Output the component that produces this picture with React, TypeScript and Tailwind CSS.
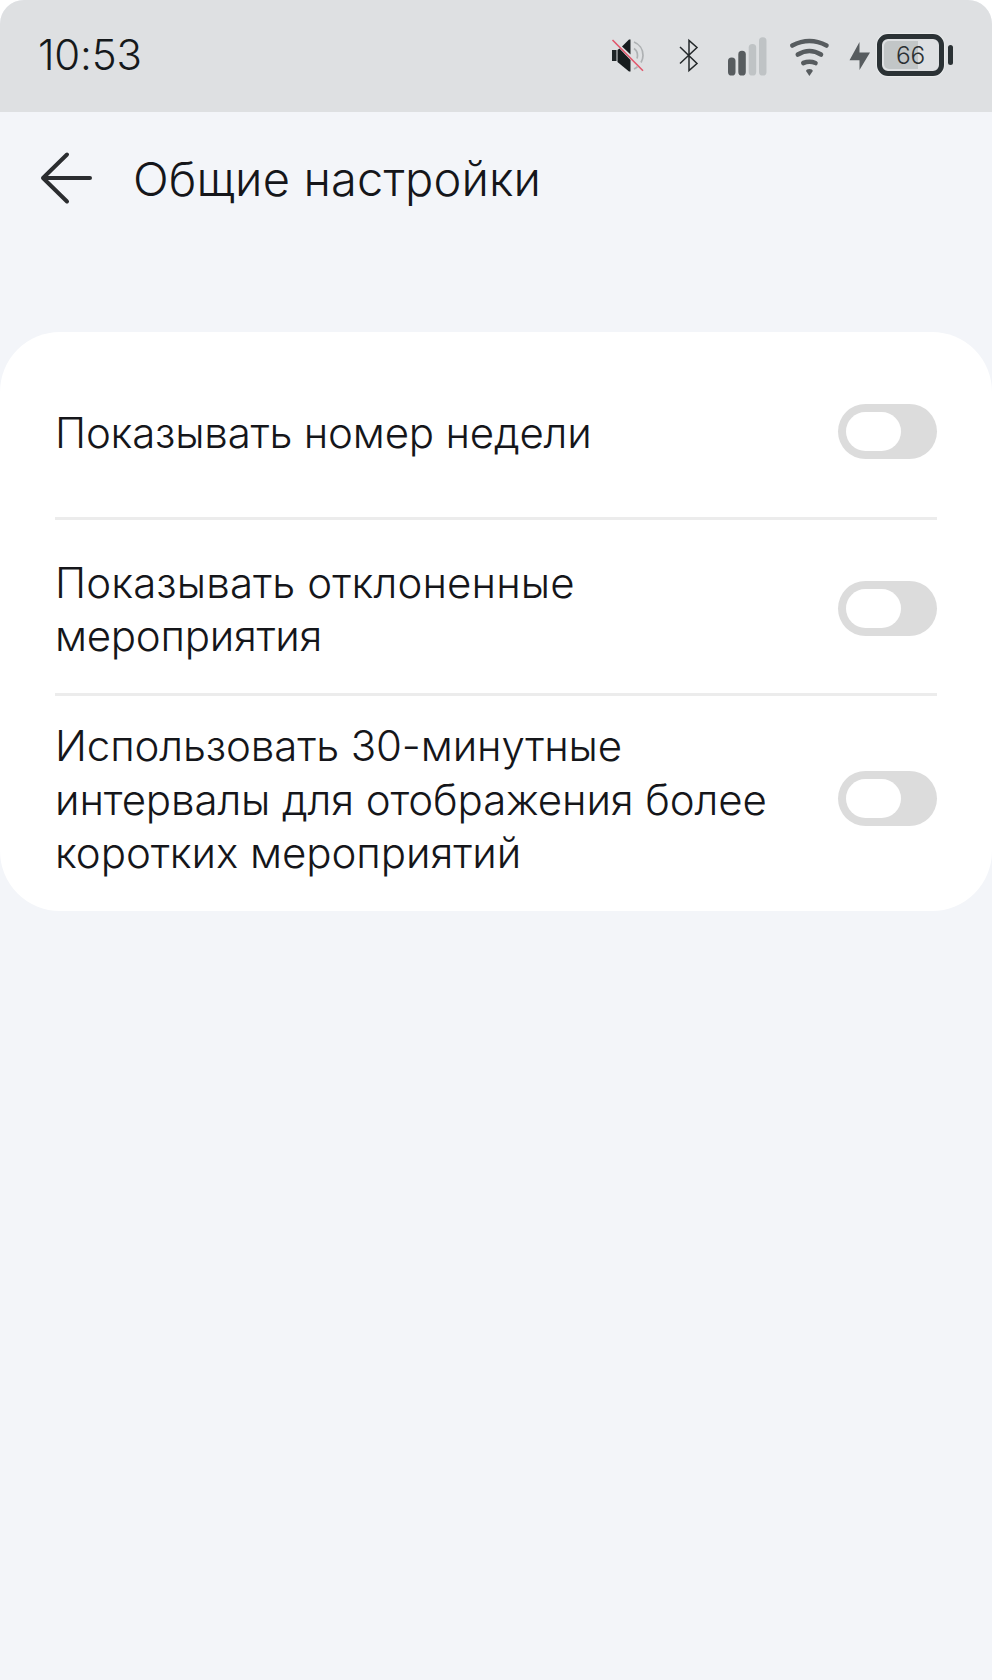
import { useState } from 'react';

interface Setting {
  id: string;
  lines: { text: string; tracking: string }[];
  rowClass: string;
  textClass: string;
}

const SETTINGS: Setting[] = [
  {
    id: 'week-number',
    lines: [{ text: 'Показывать номер недели', tracking: 'tracking-[-0.200px]' }],
    rowClass: 'h-[170px] pb-[2px]',
    textClass: 'pt-1',
  },
  {
    id: 'declined',
    lines: [
      { text: 'Показывать отклоненные', tracking: 'tracking-[0.120px]' },
      { text: 'мероприятия', tracking: 'tracking-[-0.280px]' },
    ],
    rowClass: 'h-[170px] pt-[3px]',
    textClass: 'pt-[2px]',
  },
  {
    id: 'half-hour',
    lines: [
      { text: 'Использовать 30-минутные', tracking: 'tracking-[-0.120px]' },
      { text: 'интервалы для отображения более', tracking: 'tracking-[-0.120px]' },
      { text: 'коротких мероприятий', tracking: 'tracking-[-0.060px]' },
    ],
    rowClass: 'h-[201px] pt-[2px]',
    textClass: 'pt-[2px]',
  },
];

function StatusIcons() {
  return (
    <div className="flex items-center">
      {/* Muted speaker */}
      <svg width="34" height="44" viewBox="611 32 34 44" fill="none">
        <path d="M612 49h4.500v11h-4.500z" fill="#1f2527" />
        <path d="M617.500 49l2-1.500L630.500 59v11.500h-1.500L617.500 61z" fill="#171c1e" />
        <path d="M622 45.500L629 38.500h1.500V53.500z" fill="#171c1e" />
        <path d="M634 41c5 2 9 7 9 13.500 0 3-.8 5-2 7M634 47.500c2.300 1.500 3.500 4 3.500 7 0 1-.2 2-.5 3M634 68c1.500-.6 2.700-1.500 3.500-2.300" stroke="#aeb1b3" strokeWidth="1.700" />
        <path d="M612.500 39L643 69.800" stroke="#e2566b" strokeWidth="1.600" />
      </svg>

      {/* Bluetooth */}
      <svg className="ml-[33px]" width="21" height="44" viewBox="678 32 21 44" fill="none" stroke="#24292b" strokeWidth="1.500">
        <path d="M680 46L697 62.500 689 69.500V39.500L697 46.500 680 62.500" />
      </svg>

      {/* Cell signal */}
      <svg className="ml-[29px]" width="39" height="44" viewBox="728 33 39 44">
        <rect x="728" y="57.500" width="7.500" height="18" rx="3.600" fill="#575c5f" />
        <rect x="738.300" y="50.800" width="7.500" height="24.700" rx="3.600" fill="#575c5f" />
        <rect x="748.700" y="44" width="7.500" height="31.500" rx="3.600" fill="#bfc3c5" />
        <rect x="759" y="37.300" width="7.500" height="38.200" rx="3.600" fill="#bfc3c5" />
      </svg>

      {/* Wi-Fi */}
      <svg className="ml-[22px]" width="41" height="44" viewBox="789 32 41 44" fill="none" stroke="#575c5f" strokeWidth="4.600" strokeLinecap="round">
        <path d="M792.300 44.500Q809.500 35.500 826.500 44.500" />
        <path d="M797.800 53.500Q809.500 46.500 821 53.500" />
        <path d="M803.300 62Q809.500 59.500 815.500 62" />
        <path d="M806 70Q806.300 68 809.400 68T812.800 70L809.400 75z" fill="#575c5f" stroke="none" />
      </svg>

      {/* Charging bolt */}
      <svg className="ml-[19px]" width="22" height="44" viewBox="849 32 22 44">
        <path d="M859.500 41L849.500 59.300H859.500V69L870 51.500H859.500z" fill="#575c5f" />
      </svg>

      {/* Battery */}
      <div className="ml-[6px] flex items-center gap-[4px]">
        <div className="relative flex h-[42px] w-[67px] items-center justify-center rounded-[11px] border-[5px] border-[#2b3235] shadow-[0_0_1px_1px_#e9ebec]">
          <div className="absolute top-[2px] bottom-[2px] left-[2px] w-[34px] rounded-l-[5px] bg-[#c2c6c7]" />
          <span className="relative pt-px text-[24.500px] leading-none font-[350] tracking-[-0.300px] text-[#2b3033]">66</span>
        </div>
        <div className="h-5 w-[5px] rounded-full bg-[#2b3235]" />
      </div>
    </div>
  );
}

function Toggle({ on, onChange }: { on: boolean; onChange: () => void }) {
  return (
    <button
      role="switch"
      aria-checked={on}
      onClick={onChange}
      className={`flex h-[55px] w-[99px] flex-none items-center rounded-full px-2 ${on ? 'justify-end bg-blue-500' : 'justify-start bg-[#dcdcdc]'}`}
    >
      <span className="h-[39px] w-[55px] rounded-full bg-white" />
    </button>
  );
}

export default function App() {
  const [enabled, setEnabled] = useState<Record<string, boolean>>({});

  const toggle = (id: string) => setEnabled((prev) => ({ ...prev, [id]: !prev[id] }));

  return (
    <div className="h-[1680px] w-[992px] bg-white font-['Inter','Noto_Sans',sans-serif]">
      <div className="flex h-full flex-col overflow-hidden rounded-t-[24px] bg-[#f3f5f9]">
        {/* Status bar */}
        <div className="flex h-28 flex-none items-center justify-between bg-[#dee0e2] pr-[39px] pb-[3px] pl-[38px]">
          <span className="text-[42px] leading-none font-[350] tracking-[-0.200px] text-[#15191b]">10:53</span>
          <StatusIcons />
        </div>

        {/* Header */}
        <header className="flex h-[132px] flex-none items-center pl-10">
          <svg width="54" height="54" viewBox="0 0 54 54" fill="none" stroke="#2b2d30" strokeWidth="4" strokeLinecap="round" strokeLinejoin="round">
            <path d="M27 3.500L3 27L27 50.500M3 27H50" />
          </svg>
          <h1 className="ml-[39px] text-[47px] leading-none font-[350] tracking-[0.150px] whitespace-nowrap text-[#15161a]">Общие настройки</h1>
        </header>

        {/* Settings card */}
        <main className="mt-[88px] flex h-[579px] flex-none flex-col rounded-[60px] bg-white px-[55px] pt-[15px]">
          {SETTINGS.map((setting, idx) => (
            <div
              key={setting.id}
              className={`${setting.rowClass} flex flex-none items-center justify-between ${idx > 0 ? 'box-content border-t-[3px] border-[#ececec]' : ''}`}
            >
              <div className={`${setting.textClass} text-[42px] leading-[53.500px] font-[350] text-[#15161a]`}>
                {setting.lines.map((line) => (
                  <p key={line.text} className={`whitespace-nowrap ${line.tracking}`}>{line.text}</p>
                ))}
              </div>
              <Toggle on={!!enabled[setting.id]} onChange={() => toggle(setting.id)} />
            </div>
          ))}
        </main>
      </div>
    </div>
  );
}
